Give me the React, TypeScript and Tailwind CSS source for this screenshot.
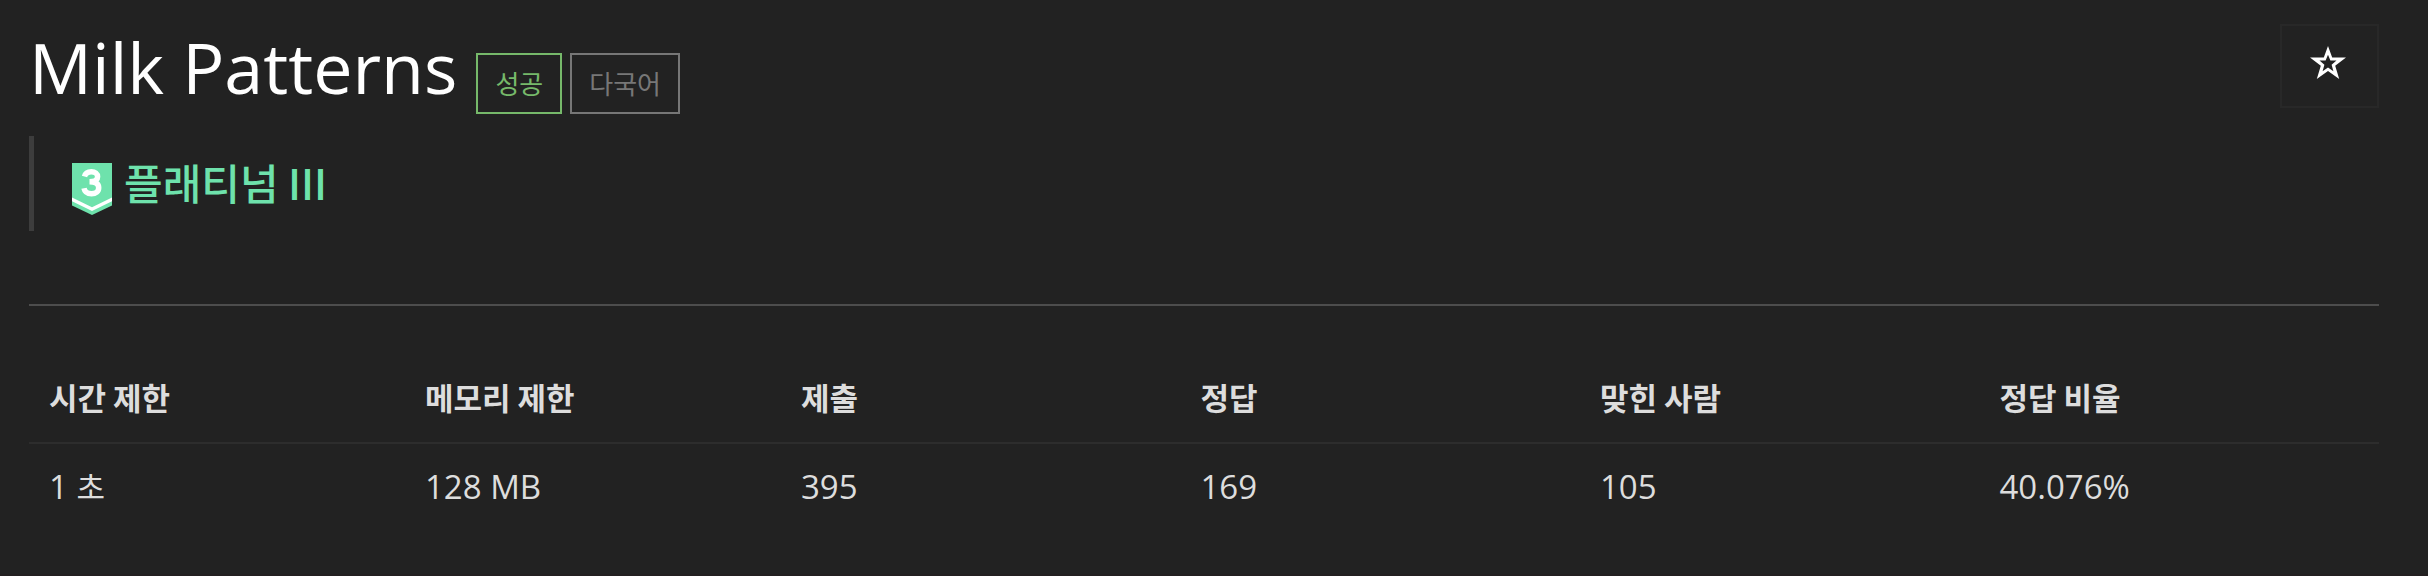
const columns = [
  { label: "시간 제한", value: <>1 <span className="text-[31px]">초</span></>, width: "w-[16%]" },
  { label: "메모리 제한", value: "128 MB", width: "w-[16%]" },
  { label: "제출", value: "395", width: "w-[17%]" },
  { label: "정답", value: "169", width: "w-[17%]" },
  { label: "맞힌 사람", value: "105", width: "w-[17%]" },
  { label: "정답 비율", value: "40.076%", width: "w-[17%]" },
];

function StarIcon() {
  return (
    <svg viewBox="0 0 36 34" className="h-[34px] w-9" aria-hidden="true">
      <path
        fillRule="evenodd"
        fill="#fff"
        d="M18 0L22.2 11.500H36L25.200 19.800L29.200 33L18 25L6.800 33L10.800 19.800L0 11.500H13.800ZM18 8.800L15.600 14.500H9.500L14.400 18.700L12.600 25.200L18 21.400L23.400 25.200L21.600 18.700L26.500 14.500H20.400Z"
      />
    </svg>
  );
}

function TierBadge() {
  return (
    <svg viewBox="0 0 40 52" className="h-[52px] w-10 shrink-0" role="img" aria-label="3">
      <path fill="#6ee2ac" d="M0 0H40V42.500L20 52L0 42.500Z" />
      <path fill="#fff" d="M0 34.500L20 44.200L40 34.500V38.200L20 48L0 38.200Z" />
      <path
        fill="none"
        stroke="#fff"
        strokeWidth="5.500"
        d="M12.500 13.500C13.300 10.400 15.900 8.700 19.300 8.700C23.200 8.700 25.600 10.600 25.600 13.700C25.600 16.800 23 18.700 17.500 18.700C23.700 18.700 26.700 20.900 26.700 24.700C26.700 28.500 23.800 30.700 19.500 30.700C15.400 30.700 12.700 28.800 12 25.300"
      />
    </svg>
  );
}

export default function App() {
  return (
    <main className="min-h-screen border-b-2 border-[#231f20] bg-[#222] pt-6 pr-[49px] pl-[29px] font-['Open_Sans','Noto_Sans_CJK_KR',sans-serif] text-[#ddd]">
      <header className="flex items-start justify-between">
        <div className="flex items-start">
          <h1 className="text-[70px] leading-[86px] text-white">Milk Patterns</h1>
          <div className="mt-[29px] ml-[19px] flex gap-2 font-['Noto_Sans_CJK_KR',sans-serif] text-[26px] leading-[55px]">
            <span className="border-2 border-[#76b96a] px-[17px] pb-0.5 text-[#76b96a]">성공</span>
            <span className="border-2 border-[#777] px-[17px] pb-0.5 text-[#777]">다국어</span>
          </div>
        </div>
        <button
          type="button"
          aria-label="즐겨찾기"
          className="flex h-[84px] w-[99px] items-center justify-center border-2 border-[#282828] pr-1 pb-1.5"
        >
          <StarIcon />
        </button>
      </header>

      <blockquote className="mt-[22px] flex h-[95px] items-start gap-3 border-l-[5px] border-[#3d3d3d] pt-[27px] pl-[38px] text-[#6ee2ac]">
        <TierBadge />
        <span className="font-['Noto_Sans_CJK_KR',sans-serif] text-[42px] leading-[38px] font-medium">플래티넘 III</span>
      </blockquote>

      <hr className="mt-[73px] border-t-2 border-[#4d4d4d]" />

      <table className="mt-[58px] w-full table-fixed border-collapse text-left">
        <thead>
          <tr className="border-b-2 border-[#2d2d2d]">
            {columns.map((c) => (
              <th
                key={c.label}
                scope="col"
                className={`${c.width} px-5 pt-[9px] pb-[21px] font-['Noto_Sans_CJK_KR',sans-serif] text-[31px] leading-[48px] font-bold`}
              >
                {c.label}
              </th>
            ))}
          </tr>
        </thead>
        <tbody>
          <tr>
            {columns.map((c) => (
              <td key={c.label} className="px-5 py-[19px] text-[33px] leading-[48px]">
                {c.value}
              </td>
            ))}
          </tr>
        </tbody>
      </table>
    </main>
  );
}
